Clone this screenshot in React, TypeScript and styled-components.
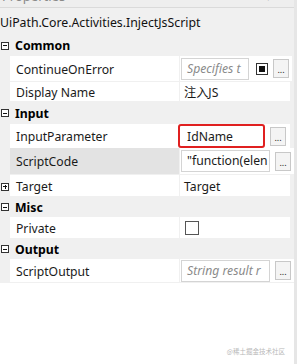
import React from "react";
import styled, { createGlobalStyle } from "styled-components";

const Global = createGlobalStyle`
  body { margin: 0; background: #fff; }
  * { box-sizing: border-box; }
`;

const Panel = styled.div`
  width: 297px;
  height: 364px;
  position: relative;
  background: #ffffff;
  font-family: "Noto Sans", "Noto Sans CJK SC", sans-serif;
  font-size: 12.2px;
  color: #1a1a1a;
  overflow: hidden;
  border-right: 3px solid #e6e6e6;
`;

const TopStrip = styled.div`
  height: 8px;
  background: #eeeeee;
  border-bottom: 1px solid #dadada;
  overflow: hidden;
  display: flex;
  justify-content: space-between;
  padding: 0 8px 0 2px;
`;

const TopText = styled.span`
  margin-top: -13px;
  color: #8a8a8a;
  font-size: 13px;
`;

const Title = styled.div`
  height: 27px;
  background: #f0f0f0;
  display: flex;
  align-items: center;
  padding-top: 1px;
  font-size: 12.3px;
  color: #111;
`;

const Grid = styled.div`
  background: #f0f0f0;
  display: flex;
  flex-direction: column;
`;

const CategoryRow = styled.div<{ $h: number }>`
  height: ${(p) => p.$h}px;
  display: flex;
  align-items: center;
  gap: 6px;
  font-weight: 700;
  font-size: 12.3px;
  color: #000;
`;

const Toggle = styled.span`
  width: 8px;
  height: 8px;
  margin-left: 1px;
  border: 1px solid #333;
  position: relative;
  background: #fff;
  flex: none;
  &::before {
    content: "";
    position: absolute;
    left: 1px;
    right: 1px;
    top: 2.5px;
    height: 1px;
    background: #111;
  }
`;

const PlusToggle = styled(Toggle)`
  &::after {
    content: "";
    position: absolute;
    top: 1px;
    bottom: 1px;
    left: 2.5px;
    width: 1px;
    background: #111;
  }
`;

const Row = styled.div<{ $h: number }>`
  height: ${(p) => p.$h}px;
  display: grid;
  grid-template-columns: 10px 169px 1px 1fr;
  border-bottom: 1px solid #f0f0f0;
`;

const Gutter = styled.div`
  display: flex;
  align-items: center;
  padding-top: 2px;
`;

const Name = styled.div<{ $sel?: boolean }>`
  background: ${(p) => (p.$sel ? "#e3e3e3" : "#fff")};
  display: flex;
  align-items: center;
  padding-left: 6px;
  padding-top: 1px;
`;

const Sep = styled.div`
  background: #f0f0f0;
`;

const Value = styled.div`
  background: #fff;
  display: flex;
  align-items: center;
  padding: 0 3px 0 1px;
  gap: 5px;
  margin-right: 4px;
`;

const PlainValue = styled.span`
  padding-left: 3px;
  padding-top: 1px;
`;

const TextBox = styled.div<{ $w: number; $red?: boolean }>`
  width: ${(p) => p.$w}px;
  height: ${(p) => (p.$red ? 24 : 22)}px;
  border: ${(p) => (p.$red ? "2px solid #e02020" : "1px solid #d4d4d4")};
  border-radius: ${(p) => (p.$red ? "3px" : "0")};
  background: #fff;
  display: flex;
  align-items: center;
  padding-left: ${(p) => (p.$red ? 7 : 5)}px;
  overflow: hidden;
  white-space: nowrap;
  flex: none;
  margin-left: ${(p) => (p.$red ? -3 : 0)}px;
`;

const Placeholder = styled.span`
  font-style: italic;
  color: #8a8a8a;
`;

const CodeBox = styled(TextBox)`
  flex-direction: column;
  align-items: flex-start;
  justify-content: flex-start;
  padding-top: 2px;
  line-height: 16px;
`;

const DotsButton = styled.div`
  width: 16px;
  height: 19px;
  border: 1px solid #c8c8c8;
  background: #f4f4f4;
  font-size: 9px;
  display: flex;
  align-items: flex-end;
  justify-content: center;
  padding-bottom: 3px;
  line-height: 1;
  flex: none;
  color: #222;
`;

const FilledCheck = styled.div`
  width: 12px;
  height: 12px;
  border: 1px solid #333;
  padding: 2px;
  flex: none;
  margin-left: 2px;
  &::after {
    content: "";
    display: block;
    width: 100%;
    height: 100%;
    background: #111;
  }
`;

const EmptyCheck = styled.div`
  width: 14px;
  height: 14px;
  border: 1px solid #555;
  margin-left: 4px;
  background: #fff;
`;

const Bottom = styled.div`
  background: #fff;
  flex: 1;
`;

const Watermark = styled.div`
  position: absolute;
  right: 9px;
  bottom: 8px;
  font-size: 6.5px;
  color: #b8b8b8;
  font-family: "Noto Sans CJK SC", sans-serif;
`;

export default function App() {
  return (
    <>
      <Global />
      <Panel>
        <TopStrip>
          <TopText>Properties</TopText>
          <TopText>▾ ✕</TopText>
        </TopStrip>
        <Title>UiPath.Core.Activities.InjectJsScript</Title>
        <Grid>
          <CategoryRow $h={21}>
            <Toggle />
            Common
          </CategoryRow>
          <Row $h={26}>
            <Gutter />
            <Name>ContinueOnError</Name>
            <Sep />
            <Value>
              <TextBox $w={68}>
                <Placeholder>Specifies t</Placeholder>
              </TextBox>
              <FilledCheck />
              <DotsButton>...</DotsButton>
            </Value>
          </Row>
          <Row $h={20}>
            <Gutter />
            <Name>Display Name</Name>
            <Sep />
            <Value>
              <PlainValue>注入JS</PlainValue>
            </Value>
          </Row>
          <CategoryRow $h={22}>
            <Toggle />
            Input
          </CategoryRow>
          <Row $h={24}>
            <Gutter />
            <Name>InputParameter</Name>
            <Sep />
            <Value>
              <TextBox $w={87} $red>
                IdName
              </TextBox>
              <DotsButton>...</DotsButton>
            </Value>
          </Row>
          <Row $h={27}>
            <Gutter />
            <Name $sel>ScriptCode</Name>
            <Sep />
            <Value>
              <CodeBox $w={89}>
                <span>"function(elen</span>
                <span>'</span>
              </CodeBox>
              <DotsButton>...</DotsButton>
            </Value>
          </Row>
          <Row $h={22}>
            <Gutter>
              <PlusToggle />
            </Gutter>
            <Name>Target</Name>
            <Sep />
            <Value>
              <PlainValue>Target</PlainValue>
            </Value>
          </Row>
          <CategoryRow $h={20}>
            <Toggle />
            Misc
          </CategoryRow>
          <Row $h={22}>
            <Gutter />
            <Name>Private</Name>
            <Sep />
            <Value>
              <EmptyCheck />
            </Value>
          </Row>
          <CategoryRow $h={20}>
            <Toggle />
            Output
          </CategoryRow>
          <Row $h={24}>
            <Gutter />
            <Name>ScriptOutput</Name>
            <Sep />
            <Value>
              <TextBox $w={89}>
                <Placeholder>String result r</Placeholder>
              </TextBox>
              <DotsButton>...</DotsButton>
            </Value>
          </Row>
        </Grid>
        <Bottom />
        <Watermark>@稀土掘金技术社区</Watermark>
      </Panel>
    </>
  );
}
